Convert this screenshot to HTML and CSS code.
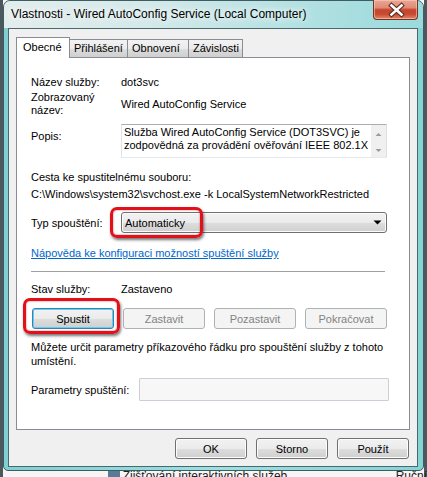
FILE: index.html
```html
<!DOCTYPE html>
<html lang="cs">
<head>
<meta charset="utf-8">
<title>Vlastnosti - Wired AutoConfig Service</title>
<link rel="stylesheet" href="styles.css">
</head>
<body>
<div class="window">
  <div class="titlebar">
    <span class="title">Vlastnosti - Wired AutoConfig Service (Local Computer)</span>
    <div class="close">
      <svg width="45" height="20" viewBox="0 0 45 20">
        <path d="M17.5 5.5 L27.5 14.5 M27.5 5.5 L17.5 14.5" stroke="#5a2a22" stroke-width="4.6" stroke-linecap="square" fill="none"/>
        <path d="M17.5 5.5 L27.5 14.5 M27.5 5.5 L17.5 14.5" stroke="#ffffff" stroke-width="2.6" stroke-linecap="square" fill="none"/>
      </svg>
    </div>
  </div>
  <div class="client">
    <div class="tabs">
      <div class="tab active t1">Obecné</div>
      <div class="tab t2">Přihlášení</div>
      <div class="tab t3">Obnovení</div>
      <div class="tab t4">Závislosti</div>
    </div>
    <div class="panel">
      <div class="row r-name">
        <span class="lbl">Název služby:</span>
        <span class="val">dot3svc</span>
      </div>
      <div class="row r-display">
        <span class="lbl two">Zobrazovaný<br>název:</span>
        <span class="val">Wired AutoConfig Service</span>
      </div>
      <div class="row r-popis">
        <span class="lbl popis-lbl">Popis:</span>
        <div class="textbox">
          <div class="tb-text">Služba Wired AutoConfig Service (DOT3SVC) je<br>zodpovědná za provádění ověřování IEEE 802.1X</div>
          <div class="tb-scroll">
            <svg width="15" height="32" viewBox="0 0 15 32">
              <path d="M4.5 11 L7.5 8 L10.5 11 Z" fill="#9a9a9a"/>
              <path d="M4.5 24 L7.5 27 L10.5 24 Z" fill="#9a9a9a"/>
            </svg>
          </div>
        </div>
      </div>
      <div class="line r-cesta">Cesta ke spustitelnému souboru:</div>
      <div class="line r-path">C:\Windows\system32\svchost.exe -k LocalSystemNetworkRestricted</div>
      <div class="row r-typ">
        <span class="lbl">Typ spouštění:</span>
        <div class="select">
          <span class="sel-text">Automaticky</span>
          <svg class="sel-arrow" width="9" height="5" viewBox="0 0 9 5"><path d="M0.5 0.5 L8.5 0.5 L4.5 4.5 Z" fill="#000"/></svg>
          <div class="mark mark-select"></div>
        </div>
      </div>
      <div class="line r-link"><a class="link" href="#">Nápověda ke konfiguraci možností spuštění služby</a></div>
      <div class="sep"></div>
      <div class="row r-stav">
        <span class="lbl">Stav služby:</span>
        <span class="val">Zastaveno</span>
      </div>
      <div class="svc-buttons">
        <div class="btn focus">Spustit<div class="mark mark-btn"></div></div>
        <div class="btn disabled">Zastavit</div>
        <div class="btn disabled wide">Pozastavit</div>
        <div class="btn disabled">Pokračovat</div>
      </div>
      <div class="note">Můžete určit parametry příkazového řádku pro spouštění služby z tohoto<br>umístění.</div>
      <div class="row r-param">
        <span class="lbl param-lbl">Parametry spuštění:</span>
        <div class="input"></div>
      </div>
    </div>
    <div class="dlg-buttons">
      <div class="btn dlg">OK</div>
      <div class="btn dlg">Storno</div>
      <div class="btn dlg">Použít</div>
    </div>
  </div>
</div>
<div class="behind"><span class="bh-icon"></span><span class="bh-name">Zjišťování interaktivních služeb</span><span class="bh-start">Ruční</span></div>
</body>
</html>
```

FILE: styles.css
```css
* { box-sizing: border-box; }
html, body { margin: 0; padding: 0; }
body {
  width: 427px;
  height: 477px;
  overflow: hidden;
  background: linear-gradient(90deg, #4d585d 0, #4d585d 3px, #f6f6f6 3px, #f6f6f6 424px, #4d585d 424px);
  font-family: "Liberation Sans", Arial, sans-serif;
  font-size: 11px;
  color: #000;
}
.window {
  position: relative;
  margin-left: 3px;
  width: 421px;
  height: 471px;
  border: 1px solid #3f5c61;
  border-radius: 7px 7px 5px 5px;
  background: linear-gradient(90deg, #7fcfd3 0, #9ee0e2 50%, #86d3d6 100%);
  display: flex;
  flex-direction: column;
}
.titlebar {
  position: relative;
  flex: none;
  height: 27px;
  display: flex;
  align-items: center;
  padding-left: 7px;
  padding-bottom: 2px;
  border-radius: 6px 6px 0 0;
  background: linear-gradient(90deg, #e4eded 0%, #d3e9ea 35%, #b3e1e2 70%, #9bdadc 100%);
}
.title {
  font-family: "Liberation Sans", Arial, sans-serif;
  font-size: 12px;
  color: #000;
  text-shadow: 0 0 6px #fff, 0 0 10px #fff;
}
.close {
  position: absolute;
  top: -1px;
  right: 5px;
  width: 45px;
  height: 20px;
  border: 1px solid #6e3528;
  border-top: none;
  border-radius: 0 0 4px 4px;
  background: linear-gradient(180deg, #eaa794 0%, #df8b76 40%, #c8432b 52%, #c84a32 75%, #e18a6a 100%);
  box-shadow: inset 0 0 0 1px rgba(255, 210, 190, 0.55);
}
.close svg { display: block; }
.client {
  flex: 1;
  margin: 0 5px 3px 4px;
  border: 1px solid #4b686d;
  background: #f0f0f0;
  display: flex;
  flex-direction: column;
  padding: 8px 7px 0 7px;
}
.tabs {
  display: flex;
  align-items: flex-end;
  height: 20px;
  flex: none;
}
.tab {
  height: 18px;
  border: 1px solid #898c95;
  border-bottom: none;
  background: linear-gradient(180deg, #f2f2f2 0%, #ebebeb 50%, #dddddd 51%, #cfcfcf 100%);
  padding-left: 4px;
  line-height: 16px;
  white-space: nowrap;
  margin-left: -1px;
}
.tab.active {
  position: relative;
  z-index: 1;
  height: 21px;
  margin-bottom: -1px;
  margin-left: 0;
  background: #fff;
  padding-left: 6px;
  line-height: 19px;
}
.t1 { width: 54px; }
.t2 { width: 59px; }
.t3 { width: 62px; }
.t4 { width: 55px; }
.panel {
  flex: none;
  height: 373px;
  border: 1px solid #898c95;
  background: #fff;
  padding: 0 0 0 14px;
  display: flex;
  flex-direction: column;
}
.row { display: flex; align-items: center; }
.lbl { width: 90px; flex: none; line-height: 14px; }
.lbl.two { line-height: 13px; }
.val { line-height: 14px; }
.line { line-height: 14px; height: 14px; white-space: nowrap; }
.r-name { margin-top: 17px; height: 14px; }
.r-display { margin-top: 2px; height: 26px; }
.r-popis { margin-top: 7px; height: 34px; align-items: flex-start; }
.popis-lbl { padding-top: 5px; }
.textbox {
  width: 266px;
  height: 34px;
  border: 1px solid #abadb3;
  border-right-color: #dbdfe6;
  border-bottom-color: #e3e9ef;
  border-left-color: #e2e3ea;
  background: #fff;
  display: flex;
}
.tb-text {
  flex: 1;
  padding: 1px 0 0 2px;
  line-height: 13px;
  white-space: nowrap;
  overflow: hidden;
}
.tb-scroll {
  width: 15px;
  flex: none;
  background: #f0f0f0;
}
.tb-scroll svg { display: block; }
.r-cesta { margin-top: 12px; }
.r-path { margin-top: 3px; }
.r-typ { margin-top: 11px; height: 21px; }
.select {
  position: relative;
  width: 266px;
  height: 21px;
  border: 1px solid #707070;
  border-radius: 3px;
  background: linear-gradient(180deg, #f2f2f2 0%, #ebebeb 50%, #dddddd 51%, #cfcfcf 100%);
  box-shadow: inset 0 0 0 1px #fbfbfb;
  display: flex;
  align-items: center;
  padding-left: 3px;
}
.sel-text { flex: 1; }
.sel-arrow { margin-right: 4px; }
.mark {
  position: absolute;
  border: 3px solid #e3101a;
  border-radius: 7px;
  box-shadow: 1px 2px 3px rgba(0, 0, 0, 0.55), inset 0 0 2px rgba(160, 0, 0, 0.6);
  pointer-events: none;
}
.mark-select { left: -12px; top: -6px; width: 93px; height: 31px; }
.r-link { margin-top: 13px; }
.link { color: #0066cc; text-decoration: underline; }
.sep {
  margin-top: 11px;
  width: 354px;
  height: 2px;
  border-top: 1px solid #a0a0a0;
  border-bottom: 1px solid #fff;
}
.r-stav { margin-top: 9px; height: 14px; }
.svc-buttons {
  margin-top: 12px;
  margin-left: 1px;
  display: flex;
  gap: 9px;
}
.btn {
  position: relative;
  width: 82px;
  height: 21px;
  border: 1px solid #707070;
  border-radius: 3px;
  background: linear-gradient(180deg, #f2f2f2 0%, #ebebeb 50%, #dddddd 51%, #cfcfcf 100%);
  box-shadow: inset 0 0 0 1px #fcfcfc;
  display: flex;
  align-items: center;
  justify-content: center;
  line-height: 14px;
}
.btn.focus {
  border-color: #3c7fb1;
  box-shadow: inset 0 0 0 1px #5fd0f5;
}
.btn.disabled {
  border-color: #adb2b5;
  background: #f4f4f4;
  box-shadow: none;
  color: #838383;
}
.mark-btn { left: -10px; top: -11px; width: 97px; height: 36px; }
.note { margin-top: 11px; line-height: 14px; height: 28px; white-space: nowrap; }
.r-param { margin-top: 10px; height: 23px; }
.param-lbl { width: 108px; }
.input {
  width: 250px;
  height: 23px;
  border: 1px solid #c9d0d8;
  border-radius: 1px;
  background: #f7f7f7;
}
.dlg-buttons {
  margin-top: 8px;
  display: flex;
  justify-content: flex-end;
  gap: 9px;
  padding-right: 1px;
}
.btn.dlg { width: 72px; height: 21px; }
.behind {
  height: 6px;
  overflow: hidden;
  display: flex;
  align-items: flex-start;
  padding-left: 108px;
  font-size: 12px;
  line-height: 10px;
  color: #222;
  white-space: nowrap;
}
.bh-icon { width: 12px; height: 6px; background: #5a7a9a; margin-right: 3px; }
.bh-name { width: 280px; }
```
